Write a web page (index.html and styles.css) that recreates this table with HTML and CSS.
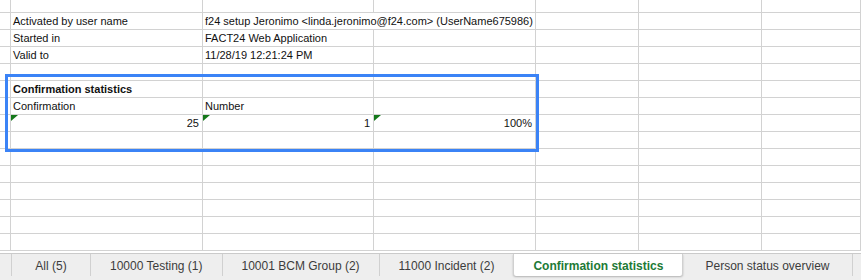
FILE: index.html
```html
<!DOCTYPE html>
<html lang="en">
	<head>
		<meta charset="UTF-8" />
		<meta name="viewport" content="width=device-width, initial-scale=1.0" />
		<title>Confirmation statistics</title>
		<link rel="stylesheet" href="styles.css">
	</head>
	<body>
		<div class="sheet">
			<div class="grid">
				<!-- row 0 (partly scrolled out) -->
				<div class="cell"></div><div class="cell"></div><div class="cell"></div><div class="cell"></div><div class="cell"></div><div class="cell"></div><div class="cell"></div>

				<!-- header info -->
				<div class="cell"></div>
				<div class="cell">Activated by user name</div>
				<div class="cell wide">f24 setup Jeronimo &lt;linda.jeronimo@f24.com&gt; (UserName675986)</div>
				<div class="cell"></div><div class="cell"></div><div class="cell"></div>

				<div class="cell"></div>
				<div class="cell">Started in</div>
				<div class="cell">FACT24 Web Application</div>
				<div class="cell"></div><div class="cell"></div><div class="cell"></div><div class="cell"></div>

				<div class="cell"></div>
				<div class="cell">Valid to</div>
				<div class="cell">11/28/19 12:21:24 PM</div>
				<div class="cell"></div><div class="cell"></div><div class="cell"></div><div class="cell"></div>

				<div class="cell"></div><div class="cell"></div><div class="cell"></div><div class="cell"></div><div class="cell"></div><div class="cell"></div><div class="cell"></div>

				<!-- statistics block -->
				<div class="cell"></div>
				<div class="cell bold">Confirmation statistics</div>
				<div class="cell"></div><div class="cell"></div><div class="cell"></div><div class="cell"></div><div class="cell"></div>

				<div class="cell"></div>
				<div class="cell">Confirmation</div>
				<div class="cell">Number</div>
				<div class="cell"></div><div class="cell"></div><div class="cell"></div><div class="cell"></div>

				<div class="cell"></div>
				<div class="cell num note">25</div>
				<div class="cell num note">1</div>
				<div class="cell num note">100%</div>
				<div class="cell"></div><div class="cell"></div><div class="cell"></div>

				<!-- empty rows -->
				<div class="cell"></div><div class="cell"></div><div class="cell"></div><div class="cell"></div><div class="cell"></div><div class="cell"></div><div class="cell"></div>
				<div class="cell"></div><div class="cell"></div><div class="cell"></div><div class="cell"></div><div class="cell"></div><div class="cell"></div><div class="cell"></div>
				<div class="cell"></div><div class="cell"></div><div class="cell"></div><div class="cell"></div><div class="cell"></div><div class="cell"></div><div class="cell"></div>
				<div class="cell"></div><div class="cell"></div><div class="cell"></div><div class="cell"></div><div class="cell"></div><div class="cell"></div><div class="cell"></div>
				<div class="cell"></div><div class="cell"></div><div class="cell"></div><div class="cell"></div><div class="cell"></div><div class="cell"></div><div class="cell"></div>
				<div class="cell"></div><div class="cell"></div><div class="cell"></div><div class="cell"></div><div class="cell"></div><div class="cell"></div><div class="cell"></div>
				<div class="cell"></div><div class="cell"></div><div class="cell"></div><div class="cell"></div><div class="cell"></div><div class="cell"></div><div class="cell"></div>
			</div>
			<div class="selection"></div>
		</div>

		<div class="tabs">
			<div class="tab">All (5)</div>
			<div class="tab">10000 Testing (1)</div>
			<div class="tab">10001 BCM Group (2)</div>
			<div class="tab">11000 Incident (2)</div>
			<div class="tab active">Confirmation statistics</div>
			<div class="tab">Person status overview</div>
		</div>
	</body>
</html>
```

FILE: styles.css
```css
body {
	margin: 0;
	width: 861px;
	height: 280px;
	overflow: hidden;
	background-color: #fff;
	font-family: "Liberation Sans", Arial, sans-serif;
	color: #111;
}
.sheet {
	position: relative;
	height: 253px;
	overflow: hidden;
}
.grid {
	display: grid;
	grid-template-columns: 11px 192px 171px 162px 103px 123px 1fr;
	grid-template-rows: 13px repeat(14, 17px);
}
.cell {
	position: relative;
	box-sizing: border-box;
	border-right: 1px solid #d2d2d2;
	border-bottom: 1px solid #d2d2d2;
	padding: 0 2px;
	font-size: 11px;
	line-height: 16px;
	white-space: nowrap;
}
.wide {
	grid-column: span 2;
}
.bold {
	font-weight: bold;
}
.num {
	text-align: right;
	padding-right: 3px;
}
/* green comment marker in the top-left corner */
.note::before {
	content: "";
	position: absolute;
	left: 0;
	top: 0;
	width: 7px;
	height: 6px;
	background-color: #14781a;
	clip-path: polygon(0 0, 100% 0, 0 100%);
}
.selection {
	position: absolute;
	left: 5px;
	top: 74px;
	width: 534px;
	height: 78px;
	box-sizing: border-box;
	border: 3px solid #3b83f6;
}
.tabs {
	display: flex;
	align-items: flex-start;
	height: 27px;
	box-sizing: border-box;
	padding-left: 11px;
	border-top: 1px solid #cacaca;
	background-color: #eeeeee;
}
.tab {
	box-sizing: border-box;
	height: 22px;
	min-width: 79px;
	padding: 2px 19px 0;
	border-left: 1px solid #d0d0d0;
	font-size: 12px;
	line-height: 20px;
	color: #3c3c3c;
	text-align: center;
	white-space: nowrap;
}
.tab:last-child {
	border-right: 1px solid #d0d0d0;
	padding: 2px 22px 0;
}
.tab.active {
	background-color: #fff;
	border-right: 1px solid #d0d0d0;
	border-radius: 0 0 3px 3px;
	box-shadow: 0 1px 2px rgba(0, 0, 0, 0.25);
	color: #1d7a36;
	font-weight: bold;
}
.tab.active + .tab {
	border-left: none;
}
```
